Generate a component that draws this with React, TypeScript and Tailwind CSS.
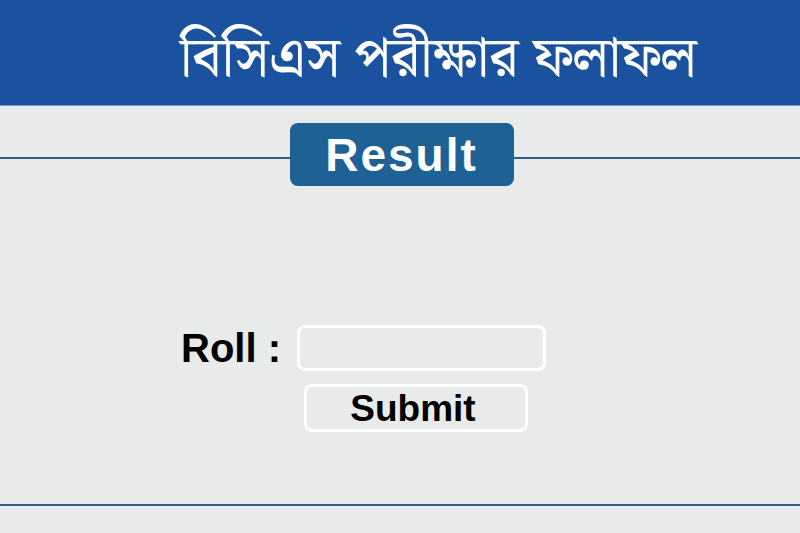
export default function App() {
  return (
    <div
      className="w-[800px] h-[533px] bg-[#e9eaea] overflow-hidden flex flex-col"
      style={{ fontFamily: '"Liberation Sans", Arial, sans-serif' }}
    >
      {/* title bar */}
      <div className="h-[106px] bg-[#1b52a0] border-b border-[#6f9ad0] flex items-center pl-[180px] pt-[14px]">
        <h1
          className="text-white text-[56px] font-medium leading-none"
          style={{ fontFamily: '"Noto Serif Bengali", "Noto Sans Bengali", "Lohit Bengali", "Noto Sans", sans-serif' }}
        >
          বিসিএস পরীক্ষার ফলাফল
        </h1>
      </div>

      {/* heading with rule */}
      <div className="relative mt-[17px] h-[63px] flex items-center justify-center">
        <div className="absolute left-0 right-0 top-[34px] h-[2px] bg-[#2a5f8e]" />
        <div className="relative ml-[3px] w-[224px] h-[63px] rounded-[8px] bg-[#1e6194] flex items-center justify-center">
          <span className="text-white text-[46px] font-bold leading-none tracking-[2px]">Result</span>
        </div>
      </div>

      {/* form */}
      <div className="mt-[139px] flex flex-col">
        <div className="flex items-center pl-[181px]">
          <label className="text-black text-[40px] font-bold leading-none w-[116px]">Roll :</label>
          <input
            type="text"
            className="w-[249px] h-[46px] rounded-[8px] border-[3px] border-white bg-transparent outline-none px-2 text-2xl"
          />
        </div>
        <div className="pl-[304px] mt-[13px]">
          <button className="w-[224px] h-[48px] rounded-[8px] border-[3px] border-white bg-transparent text-black text-[37px] font-bold leading-none pr-[6px]">
            Submit
          </button>
        </div>
      </div>

      <div className="mt-[72px] h-[2px] bg-[#2a5f8e]" />
    </div>
  );
}
